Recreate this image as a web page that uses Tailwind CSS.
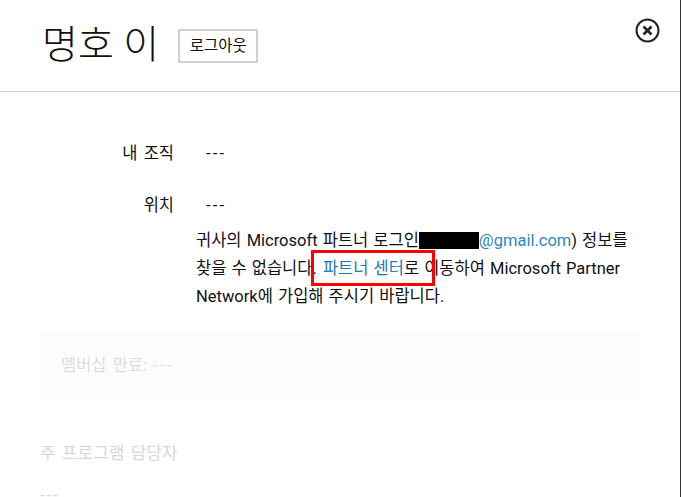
<!DOCTYPE html>
<html lang="ko">
<head>
<meta charset="UTF-8">
<title>명호 이</title>
<script src="https://cdn.jsdelivr.net/npm/@tailwindcss/browser@4"></script>
</head>
<body class="bg-white font-['Roboto','Noto_Sans_CJK_KR',sans-serif] text-[#111] overflow-hidden">
<div class="relative h-[497px] w-[681px] overflow-hidden border-r border-[#333]">
  <header class="flex h-[92px] items-start border-b border-[#d4d4d4] pl-[42px]">
    <h1 class="mt-[18px] text-[39px] font-light leading-[54px]">명호 이</h1>
    <button class="ml-[19px] mt-[29px] h-[34px] w-[80px] border-2 border-[#d0d0d0] text-[15.5px] leading-[28px]">로그아웃</button>
    <button class="ml-auto mr-[20px] mt-[18px]" aria-label="닫기">
      <svg class="h-[25px] w-[25px]" viewBox="0 0 25 25" fill="none" stroke="#222"><circle cx="12.5" cy="12.5" r="11" stroke-width="2"/><path d="M8.5 8.5l8 8M16.5 8.5l-8 8" stroke-width="2.6"/></svg>
    </button>
  </header>
  <main class="pl-[40px] pr-[40px] pt-[49px] text-[16.5px]">
    <div class="flex h-[26px] items-center">
      <span class="w-[134px] text-right [word-spacing:2px]">내 조직</span><span class="ml-[32px] tracking-[2.2px]">---</span>
    </div>
    <div class="mt-[26px] flex h-[26px] items-center">
      <span class="w-[134px] text-right">위치</span><span class="ml-[32px] tracking-[2.2px]">---</span>
    </div>
    <p class="ml-[156px] mt-[8px] w-[440px] leading-[28px] [word-spacing:1px]">귀사의 Microsoft 파트너 로그인<span class="inline-block h-[17px] w-[60px] bg-black align-[-3px]"></span><span class="text-[#2f86b8]">@gmail.com</span>) 정보를 찾을 수 없습니다. <a class="ml-px text-[#1f7ab0]">파트너 센터</a>로 이동하여 Microsoft Partner Network에 가입해 주시기 바랍니다.</p>
    <div class="mt-[21px] flex h-[68px] items-center bg-[#fcfcfc] pl-[21px] text-[#dcdcdc] [word-spacing:2px]">멤버십 만료: <span class="ml-[6px] tracking-[2.4px]">---</span></div>
    <h2 class="mt-[41px] text-[17px] text-[#d8d8d8] [word-spacing:2px]">주 프로그램 담당자</h2>
    <p class="mt-[17px] tracking-[2px] text-[#d8d8d8]">---</p>
  </main>
  <div class="absolute left-[311px] top-[250px] h-[36px] w-[124px] border-[3px] border-[#ff0000]"></div>
</div>
</body>
</html>
